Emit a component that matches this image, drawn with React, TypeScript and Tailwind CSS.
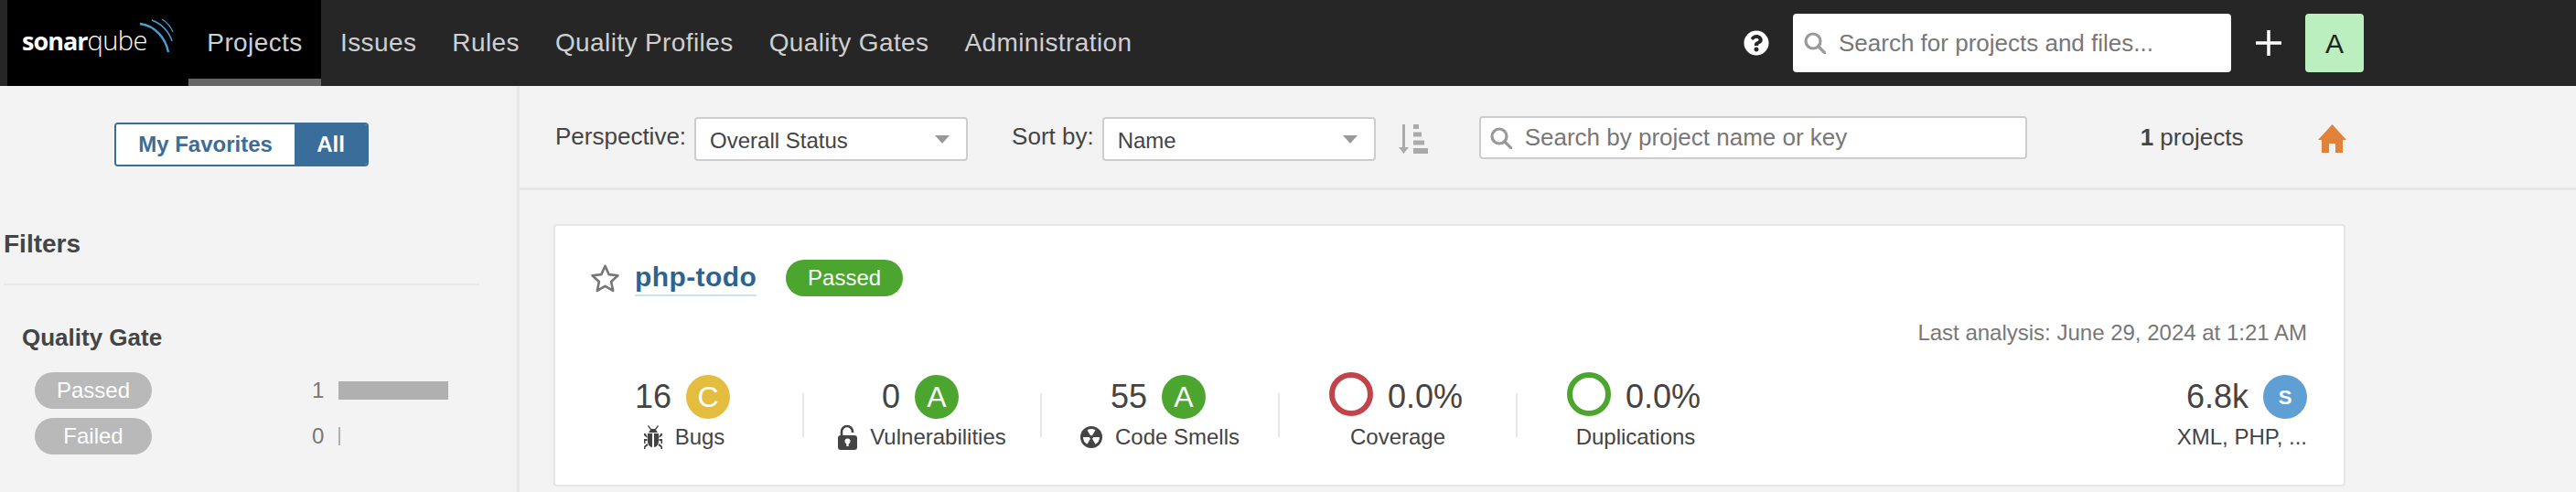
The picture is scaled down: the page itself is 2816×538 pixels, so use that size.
import { FaQuestionCircle } from 'react-icons/fa';

const navItems = ['Issues', 'Rules', 'Quality Profiles', 'Quality Gates', 'Administration'];

function SearchIcon({ className }: { className: string }) {
  return (
    <svg viewBox="0 0 24 24" className={className} fill="none" stroke="#999" strokeWidth="3.2">
      <circle cx="10" cy="10" r="8" />
      <path d="M16 16l7 7" strokeLinecap="round" />
    </svg>
  );
}

function Logo() {
  return (
    <div className="relative h-full w-[198px] bg-black pl-[16px] pt-[24px] font-['Open_Sans',sans-serif] text-[29px] leading-[40px] tracking-[-0.5px] text-white">
      <span className="text-[27px] font-bold tracking-[-1px]">sonar</span>
      <span className="font-light">qube</span>
      <svg viewBox="0 0 50 45" className="absolute left-[137px] top-[18px] h-[45px] w-[50px]" fill="none" stroke="#4b9fd5">
        <path d="M8 8c17 2 28 16 31 31" strokeWidth="2.4" />
        <path d="M21 4c11 4 19 13 22 23" strokeWidth="1.6" />
        <path d="M32 3c5 3 10 9 12 14" strokeWidth="1.2" />
      </svg>
    </div>
  );
}

function Nav() {
  return (
    <nav className="flex h-[94px] items-center bg-[#262626] pl-[8px] pr-[232px] text-[28px] tracking-[0.4px] text-[#cfcfcf]">
      <Logo />
      <a className="flex h-full w-[145px] items-center justify-center border-y-[8px] border-t-transparent border-b-[#666] bg-black">Projects</a>
      <div className="ml-[21px] flex gap-[39px]">
        {navItems.map((item) => (
          <a key={item}>{item}</a>
        ))}
      </div>
      <div className="ml-auto flex items-center">
        <FaQuestionCircle className="h-[28px] w-[28px] text-white" />
        <div className="ml-[26px] flex h-[64px] w-[479px] items-center gap-[14px] rounded-[4px] bg-white pl-[12px] text-[26px] tracking-normal text-[#777]">
          <SearchIcon className="h-[24px] w-[24px]" />
          Search for projects and files...
        </div>
        <svg viewBox="0 0 28 28" className="ml-[27px] h-[28px] w-[28px]" fill="none" stroke="#fff" strokeWidth="3.5">
          <path d="M14 0v28M0 14h28" />
        </svg>
        <div className="ml-[26px] flex h-[64px] w-[64px] items-center justify-center rounded-[4px] bg-[#bbefc0] text-[30px] tracking-normal text-[#222]">
          A
        </div>
      </div>
    </nav>
  );
}

function FacetRow({ label, count, barClass }: { label: string; count: number; barClass: string }) {
  return (
    <div className="flex h-[40px] items-center pl-[34px]">
      <span className="flex h-[40px] w-[128px] items-center justify-center rounded-[20px] bg-[#b9b9b9] text-[24px] text-white">
        {label}
      </span>
      <span className="ml-auto w-[16px] text-[24px] text-[#777]">{count}</span>
      <span className={`ml-[13px] h-[20px] bg-[#b0b0b0] ${barClass}`} />
    </div>
  );
}

function Sidebar() {
  return (
    <aside className="w-[568px] shrink-0 self-stretch border-r-[3px] border-[#e8e8e8] pl-[4px] pr-[41px]">
      <div className="flex justify-center pt-[40px]">
        <div className="flex h-[48px] overflow-hidden rounded-[4px] border-2 border-[#3a6d9a] text-[24px] font-bold">
          <span className="flex w-[195px] items-center justify-center bg-white text-[#3a6d9a]">My Favorites</span>
          <span className="flex w-[79px] items-center justify-center bg-[#3a6d9a] text-white">All</span>
        </div>
      </div>
      <h2 className="mt-[69px] h-[59px] text-[28px] leading-[32px] font-bold text-[#444]">Filters</h2>
      <div className="h-[2px] bg-[#e8e8e8]" />
      <h3 className="mt-[41px] pl-[20px] text-[26px] leading-[32px] font-bold text-[#444]">Quality Gate</h3>
      <div className="mt-[22px] flex flex-col gap-[10px] pr-[34px]">
        <FacetRow label="Passed" count={1} barClass="w-[120px]" />
        <FacetRow label="Failed" count={0} barClass="mr-[118px] w-[2px]" />
      </div>
    </aside>
  );
}

function Select({ value }: { value: string }) {
  return (
    <div className="flex h-[48px] w-[299px] items-center justify-between rounded-[4px] border-2 border-[#cdcdcd] bg-white pl-[15px] pr-[18px] text-[24px] text-[#444]">
      <span className="pt-[3px]">{value}</span>
      <span className="h-0 w-0 border-x-[8px] border-t-[9px] border-x-transparent border-t-[#999]" />
    </div>
  );
}

function Toolbar() {
  return (
    <div className="flex h-[114px] items-center border-b-[3px] border-[#e6e6e6] pl-[39px] text-[26px] text-[#444]">
      <span>Perspective:</span>
      <div className="ml-[9px] mt-[5px]">
        <Select value="Overall Status" />
      </div>
      <span className="ml-[48px]">Sort by:</span>
      <div className="ml-[9px] mt-[5px]">
        <Select value="Name" />
      </div>
      <svg viewBox="0 0 32 32" className="ml-[25px] mt-[4px] h-[32px] w-[32px]" fill="#aaa">
        <path d="M4 0h3v25h4l-5.500 7L0 25h4zM16 0h6v5h-6zM16 8.500h9v5h-9zM16 17.500h12v5h-12zM16 26h16v6H16z" />
      </svg>
      <div className="ml-[56px] mt-[2px] flex h-[47px] w-[599px] items-center gap-[14px] rounded-[4px] border-2 border-[#cdcdcd] bg-white pl-[10px] text-[#777]">
        <SearchIcon className="h-[24px] w-[24px]" />
        Search by project name or key
      </div>
      <span className="ml-[124px] mt-[2px]">
        <b>1</b> projects
      </span>
      <svg viewBox="0 0 31 31" className="ml-[82px] mt-[4px] h-[31px] w-[31px]" fill="#e0823a">
        <path d="M15.500 0L31 17h-4v14h-8V21h-7v10H4V17H0z" />
      </svg>
    </div>
  );
}

function BugIcon() {
  return (
    <svg viewBox="0 0 20 26" className="h-[26px] w-[20px]" fill="#444">
      <path d="M5 0l3 4h4l3-4 1 1-3 4 2 3H5l2-3-3-4z" />
      <path d="M4 9h5v15c-3 0-5-3-5-7zM11 9h5v8c0 4-2 7-5 7z" />
      <path d="M0 9h1.500l2 3v2L0 11zM20 9h-1.500l-2 3v2l3.500-3zM0 15h3.500v2H1.500v3H0zM20 15h-3.500v2h2v3H20zM0 26v-3l3.500-3 1 2-3 2v2zM20 26v-3l-3.500-3-1 2 3 2v2z" />
    </svg>
  );
}

function LockIcon() {
  return (
    <svg viewBox="0 0 21 27" className="h-[27px] w-[21px]">
      <path d="M4 12V7a6 6 0 0 1 12 0v1" fill="none" stroke="#444" strokeWidth="2.600" />
      <rect x="0" y="11" width="21" height="16" rx="3" fill="#444" />
      <circle cx="10.500" cy="17.500" r="3" fill="#fff" />
      <path d="M9.300 18h2.400v5H9.300z" fill="#fff" />
    </svg>
  );
}

function SmellIcon() {
  return (
    <svg viewBox="0 0 24 24" className="h-[24px] w-[24px]">
      <circle cx="12" cy="12" r="12" fill="#444" />
      <path d="M12 12L7.500 4.200a9 9 0 0 1 9 0zM12 12h9a9 9 0 0 1-4.500 7.800zM12 12l-4.500 7.800A9 9 0 0 1 3 12z" fill="#fff" />
      <circle cx="12" cy="12" r="2" fill="#444" />
    </svg>
  );
}

function Rating({ letter, color }: { letter: string; color: string }) {
  return (
    <span className={`flex h-[48px] w-[48px] items-center justify-center rounded-full text-[32px] text-white ${color}`}>
      {letter}
    </span>
  );
}

function Measure({
  value,
  mark,
  icon,
  label,
}: {
  value: React.ReactNode;
  mark: React.ReactNode;
  icon?: React.ReactNode;
  label: string;
}) {
  return (
    <div className="flex w-[258px] flex-col items-center">
      <div className="flex h-[48px] items-center gap-[16px] pr-[4px] text-[36px] text-[#444]">
        {value}
        {mark}
      </div>
      <div className="mt-[6px] flex h-[28px] items-center gap-[14px] text-[24px] text-[#444]">
        {icon}
        {label}
      </div>
    </div>
  );
}

function Ring({ color }: { color: string }) {
  return <span className={`mb-[6px] h-[48px] w-[48px] rounded-full border-[6px] ${color}`} />;
}

function Divider() {
  return <div className="mt-[20px] h-[48px] w-[2px] shrink-0 bg-[#e6e6e6]" />;
}

function Card() {
  return (
    <div className="ml-[37px] mt-[37px] h-[287px] w-[1959px] rounded-[4px] border-2 border-[#e6e6e6] bg-white pr-[40px]">
      <div className="mt-[37px] flex h-[40px] items-center pl-[38px]">
        <svg viewBox="0 0 24 24" className="h-[33px] w-[33px]" fill="none" stroke="#777" strokeWidth="1.900" strokeLinejoin="round">
          <path d="M12 2l3 6.800 7.200.8-5.400 4.900 1.500 7.300L12 18.100l-6.300 3.700 1.500-7.300L1.800 9.600 9 8.800z" />
        </svg>
        <a className="ml-[16px] border-b-2 border-[#cae3f2] text-[30px] leading-[38px] font-bold tracking-[0.4px] text-[#2d6391]">php-todo</a>
        <span className="ml-[32px] flex h-[40px] w-[128px] items-center justify-center rounded-[20px] bg-[#4ca52e] text-[24px] text-white">
          Passed
        </span>
      </div>
      <div className="mt-[26px] text-right text-[24px] leading-[28px] text-[#777]">Last analysis: June 29, 2024 at 1:21 AM</div>
      <div className="mt-[32px] flex items-start pl-[12px]">
        <Measure value="16" mark={<Rating letter="C" color="bg-[#e4bd3f]" />} icon={<BugIcon />} label="Bugs" />
        <Divider />
        <Measure value="0" mark={<Rating letter="A" color="bg-[#4ca52e]" />} icon={<LockIcon />} label="Vulnerabilities" />
        <Divider />
        <Measure value="55" mark={<Rating letter="A" color="bg-[#4ca52e]" />} icon={<SmellIcon />} label="Code Smells" />
        <Divider />
        <Measure value={<Ring color="border-[#c1444a]" />} mark="0.0%" label="Coverage" />
        <Divider />
        <Measure value={<Ring color="border-[#4ca52e]" />} mark="0.0%" label="Duplications" />
        <div className="ml-auto flex flex-col items-end">
          <div className="flex h-[48px] items-center gap-[16px] text-[36px] text-[#444]">
            6.8k
            <span className="flex h-[48px] w-[48px] items-center justify-center rounded-full bg-[#5f9fd4] text-[22px] font-bold text-white">S</span>
          </div>
          <div className="mt-[6px] h-[28px] text-[24px] leading-[28px] text-[#444]">XML, PHP, ...</div>
        </div>
      </div>
    </div>
  );
}

export default function App() {
  return (
    <div className="h-[538px] overflow-hidden bg-[#f3f3f3] font-['Liberation_Sans',Arial,sans-serif]">
      <Nav />
      <div className="flex h-[444px]">
        <Sidebar />
        <main className="flex-1">
          <Toolbar />
          <Card />
        </main>
      </div>
    </div>
  );
}
